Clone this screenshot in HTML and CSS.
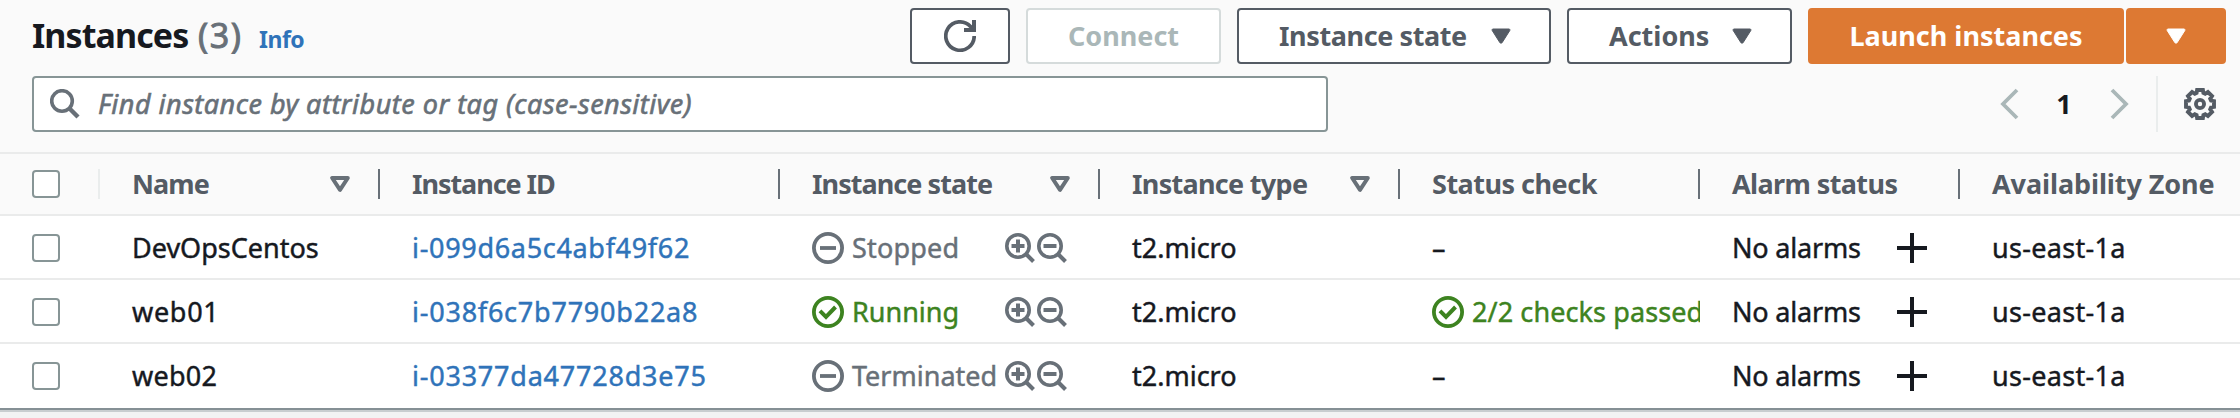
FILE: index.html
```html
<!DOCTYPE html>
<html lang="en">
<head>
<meta charset="utf-8">
<title>Instances</title>
<link rel="stylesheet" href="styles.css">
</head>
<body>
<svg class="defs" aria-hidden="true">
  <symbol id="caret" viewBox="0 0 20 16"><path d="M2 1h16c.8 0 1.2.8.8 1.500L11.200 14.500c-.6 1-1.800 1-2.400 0L1.200 2.500C.8 1.800 1.200 1 2 1z" fill="currentColor" stroke="currentColor" stroke-width="1"/></symbol>
  <symbol id="sort" viewBox="0 0 20 16"><path d="M2.200 2h15.600L10 13.800z" fill="none" stroke="currentColor" stroke-width="4" stroke-linejoin="round"/></symbol>
  <symbol id="minus-circle" viewBox="0 0 32 32"><circle cx="16" cy="16" r="14.100" fill="none" stroke="currentColor" stroke-width="3.800"/><path d="M8 16h16" stroke="currentColor" stroke-width="3.800"/></symbol>
  <symbol id="check-circle" viewBox="0 0 32 32"><circle cx="16" cy="16" r="14.100" fill="none" stroke="currentColor" stroke-width="3.800"/><path d="M8 14.800l6 6L23.500 11" fill="none" stroke="currentColor" stroke-width="4"/></symbol>
  <symbol id="zoom-in" viewBox="0 0 30 30"><circle cx="13" cy="13" r="11.200" fill="none" stroke="currentColor" stroke-width="3.600"/><path d="M21 21l7.500 7.500" stroke="currentColor" stroke-width="4"/><path d="M6.500 13h13M13 6.500v13" stroke="currentColor" stroke-width="4"/></symbol>
  <symbol id="zoom-out" viewBox="0 0 30 30"><circle cx="13" cy="13" r="11.200" fill="none" stroke="currentColor" stroke-width="3.600"/><path d="M21 21l7.500 7.500" stroke="currentColor" stroke-width="4"/><path d="M6.500 13h13" stroke="currentColor" stroke-width="4"/></symbol>
  <symbol id="plus" viewBox="0 0 30 30"><path d="M0 15h30M15 0v30" stroke="currentColor" stroke-width="4"/></symbol>
</svg>

<header class="toolbar">
  <div class="title-row">
    <h1 class="title">Instances</h1>
    <span class="count">(3)</span>
    <a class="info">Info</a>
    <div class="actions">
      <button class="btn btn-refresh" aria-label="Refresh">
        <svg class="icon-32" viewBox="0 0 32 32"><path d="M30.200 16A14.200 14.200 0 1 1 26.500 6.500L29 10" fill="none" stroke="currentColor" stroke-width="3.700"/><path d="M30 0v10H20" fill="none" stroke="currentColor" stroke-width="4"/></svg>
      </button>
      <button class="btn btn-connect">Connect</button>
      <button class="btn btn-menu btn-state"><span>Instance state</span><svg class="caret"><use href="#caret"/></svg></button>
      <button class="btn btn-menu btn-actions"><span>Actions</span><svg class="caret"><use href="#caret"/></svg></button>
      <div class="split">
        <button class="btn btn-primary btn-launch">Launch instances</button>
        <button class="btn btn-primary btn-more" aria-label="More"><svg class="caret"><use href="#caret"/></svg></button>
      </div>
    </div>
  </div>
  <div class="filter-row">
    <div class="search">
      <svg class="search-icon" viewBox="0 0 30 30"><circle cx="12" cy="12" r="10.300" fill="none" stroke="currentColor" stroke-width="3.600"/><path d="M19 19l9 9" stroke="currentColor" stroke-width="4.400"/></svg>
      <span class="placeholder">Find instance by attribute or tag (case-sensitive)</span>
    </div>
    <div class="pager">
      <svg class="chevron" viewBox="0 0 19 32"><path d="M17 2L3 16l14 14" fill="none" stroke="currentColor" stroke-width="3.800"/></svg>
      <span class="page">1</span>
      <svg class="chevron" viewBox="0 0 19 32"><path d="M2 2l14 14L2 30" fill="none" stroke="currentColor" stroke-width="3.800"/></svg>
      <span class="rule"></span>
      <svg class="icon-32" viewBox="-16 -16 32 32"><path d="M-2.900-14H2.900L3.400-11 5.200-10.200 7.900-12 12-7.900 10.200-5.200 11-3.400 14-2.900V2.900L11 3.400 10.200 5.200 12 7.900 7.900 12 5.200 10.200 3.400 11 2.900 14H-2.900L-3.400 11-5.200 10.200-7.900 12-12 7.900-10.200 5.200-11 3.400-14 2.900V-2.900L-11-3.400-10.200-5.200-12-7.900-7.900-12-5.200-10.200-3.400-11z" fill="none" stroke="currentColor" stroke-width="3.900"/><circle r="4.100" fill="none" stroke="currentColor" stroke-width="3.800"/></svg>
    </div>
  </div>
</header>

<main class="table">
  <div class="row head">
    <div class="cell pick"><span class="box"></span></div>
    <div class="cell"><span class="h-name">Name</span><svg class="sort"><use href="#sort"/></svg></div>
    <div class="cell"><span class="h-id">Instance ID</span></div>
    <div class="cell"><span class="h-state">Instance state</span><svg class="sort"><use href="#sort"/></svg></div>
    <div class="cell"><span class="h-type">Instance type</span><svg class="sort"><use href="#sort"/></svg></div>
    <div class="cell"><span class="h-check">Status check</span></div>
    <div class="cell"><span class="h-alarm">Alarm status</span></div>
    <div class="cell"><span class="h-zone">Availability Zone</span></div>
  </div>
  <div class="row">
    <div class="cell pick"><span class="box"></span></div>
    <div class="cell">DevOpsCentos</div>
    <div class="cell id">i-099d6a5c4abf49f62</div>
    <div class="cell state muted"><svg class="icon-32"><use href="#minus-circle"/></svg><span class="stopped">Stopped</span><span class="zooms"><svg class="icon-30"><use href="#zoom-in"/></svg><svg class="icon-30"><use href="#zoom-out"/></svg></span></div>
    <div class="cell">t2.micro</div>
    <div class="cell">–</div>
    <div class="cell alarm"><span>No alarms</span><svg class="icon-30"><use href="#plus"/></svg></div>
    <div class="cell zone">us-east-1a</div>
  </div>
  <div class="row">
    <div class="cell pick"><span class="box"></span></div>
    <div class="cell web01">web01</div>
    <div class="cell id id-wide">i-038f6c7b7790b22a8</div>
    <div class="cell state ok"><svg class="icon-32"><use href="#check-circle"/></svg><span>Running</span><span class="zooms"><svg class="icon-30"><use href="#zoom-in"/></svg><svg class="icon-30"><use href="#zoom-out"/></svg></span></div>
    <div class="cell">t2.micro</div>
    <div class="cell state check ok"><svg class="icon-32"><use href="#check-circle"/></svg><span>2/2 checks passed</span></div>
    <div class="cell alarm"><span>No alarms</span><svg class="icon-30"><use href="#plus"/></svg></div>
    <div class="cell zone">us-east-1a</div>
  </div>
  <div class="row">
    <div class="cell pick"><span class="box"></span></div>
    <div class="cell web02">web02</div>
    <div class="cell id id-wide">i-03377da47728d3e75</div>
    <div class="cell state muted"><svg class="icon-32"><use href="#minus-circle"/></svg><span>Terminated</span><span class="zooms"><svg class="icon-30"><use href="#zoom-in"/></svg><svg class="icon-30"><use href="#zoom-out"/></svg></span></div>
    <div class="cell">t2.micro</div>
    <div class="cell">–</div>
    <div class="cell alarm"><span>No alarms</span><svg class="icon-30"><use href="#plus"/></svg></div>
    <div class="cell zone">us-east-1a</div>
  </div>
</main>
</body>
</html>
```
FILE: styles.css
```css
* { box-sizing: border-box; }

body {
  margin: 0;
  width: 2240px;
  height: 418px;
  overflow: hidden;
  background: #f2f3f3;
  color: #16191f;
  font: 400 27px/36px "Noto Sans", "Open Sans", sans-serif;
  white-space: nowrap;
}

svg { display: block; flex: none; }
.defs { position: absolute; width: 0; height: 0; }
.icon-32 { width: 32px; height: 32px; }
.icon-30 { width: 30px; height: 30px; }

/* Toolbar */
.toolbar {
  height: 152px;
  padding: 8px 14px 0 32px;
  background: #fafafa;
}
.title-row { display: flex; align-items: baseline; height: 56px; }
.title {
  margin: 0;
  width: 164px;
  font-size: 34px;
  line-height: 54px;
  font-weight: 700;
  letter-spacing: -.9px;
}
.count {
  width: 63px;
  padding-left: 2px;
  color: #687078;
  font-size: 34px;
  line-height: 54px;
  letter-spacing: 1.6px;
  -webkit-text-stroke: .9px;
}
.info { color: #2f73b9; font-size: 23px; font-weight: 700; letter-spacing: -.5px; line-height: 36px; }

.actions { display: flex; align-self: flex-start; gap: 16px; margin-left: auto; }
.split { display: flex; gap: 2px; }
.btn {
  display: flex;
  align-items: center;
  justify-content: center;
  height: 56px;
  padding: 0;
  border: 2px solid #545b64;
  border-radius: 4px;
  background: #fff;
  color: #545b64;
  font: 700 27px/36px "Noto Sans", "Open Sans", sans-serif;
}
.btn-refresh { width: 100px; }
.btn-connect { width: 195px; border-color: #d5dbdb; color: #aab7b8; }
.btn-menu { justify-content: space-between; padding: 0 38px 0 40px; }
.btn-state { width: 314px; letter-spacing: -.4px; }
.btn-actions { width: 225px; }
.btn-primary { border-color: #dd7933; background: #dd7933; color: #fff; }
.btn-launch { width: 316px; }
.btn-more { width: 100px; }
.caret { width: 20px; height: 16px; }

.filter-row { display: flex; justify-content: space-between; margin-top: 12px; height: 56px; }
.search {
  display: flex;
  align-items: center;
  width: 1296px;
  padding-left: 16px;
  border: 2px solid #879596;
  border-radius: 4px;
  background: #fff;
  color: #687078;
}
.search-icon { width: 30px; height: 30px; }
.placeholder { margin-left: 18px; font-style: italic; letter-spacing: .49px; -webkit-text-stroke: .6px; }
.pager { display: flex; align-items: center; padding-right: 10px; color: #545b64; }
.chevron { width: 19px; height: 32px; color: #aab7b8; }
.page { width: 91px; padding-right: 1px; color: #16191f; font-weight: 700; text-align: center; }
.rule { width: 2px; height: 56px; margin: 0 26px 0 27px; background: #eaeded; }

/* Table */
.table { border-bottom: 2px solid #c8cdcf; }
.row {
  display: grid;
  grid-template-columns: 100px 280px 400px 320px 300px 300px 260px 280px;
  height: 64px;
  border-bottom: 2px solid #eaebeb;
  background: #fff;
  -webkit-text-stroke: .45px;
}
.row:last-child { height: 66px; border-bottom-color: #859095; }
.head {
  border-top: 2px solid #eaebeb;
  background: #fafafa;
  color: #545b64;
  font-weight: 700;
  -webkit-text-stroke: 0;
}
.cell {
  display: flex;
  align-items: center;
  min-width: 0;
  padding: 2px 0 0 32px;
  overflow: hidden;
}
.row:last-child .cell { height: 62px; }
.head .cell {
  justify-content: space-between;
  padding: 0 30px 0 32px;
  background: linear-gradient(#687078, #687078) right center / 2px 30px no-repeat;
}
.head .cell.pick { background-image: linear-gradient(#eaeded, #eaeded); }
.head .cell:last-child { padding-right: 0; background: none; }
.sort { width: 20px; height: 16px; color: #687078; }
.box {
  flex: none;
  width: 28px;
  height: 28px;
  border: 2px solid #879596;
  border-radius: 4px;
  background: #fff;
}

.h-name { letter-spacing: -.9px; }
.h-id { letter-spacing: -1.06px; }
.h-state { letter-spacing: -.95px; }
.h-type { letter-spacing: -.7px; }
.h-check { letter-spacing: -.5px; }
.h-alarm { letter-spacing: -.6px; }
.h-zone { letter-spacing: -.1px; }

.id { color: #2f73b9; letter-spacing: .68px; }
.id-wide { letter-spacing: .77px; }
.web01 { letter-spacing: .7px; }
.web02 { letter-spacing: .25px; }
.zone { letter-spacing: .3px; }
.state { gap: 8px; }
.stopped { letter-spacing: .2px; }
.check span { letter-spacing: .1px; }
.muted { color: #687078; }
.ok { color: #3d8320; }
.zooms { display: flex; gap: 2px; margin-left: auto; padding-right: 33px; color: #687078; }
.alarm { justify-content: space-between; padding-right: 33px; letter-spacing: -.2px; }
```
